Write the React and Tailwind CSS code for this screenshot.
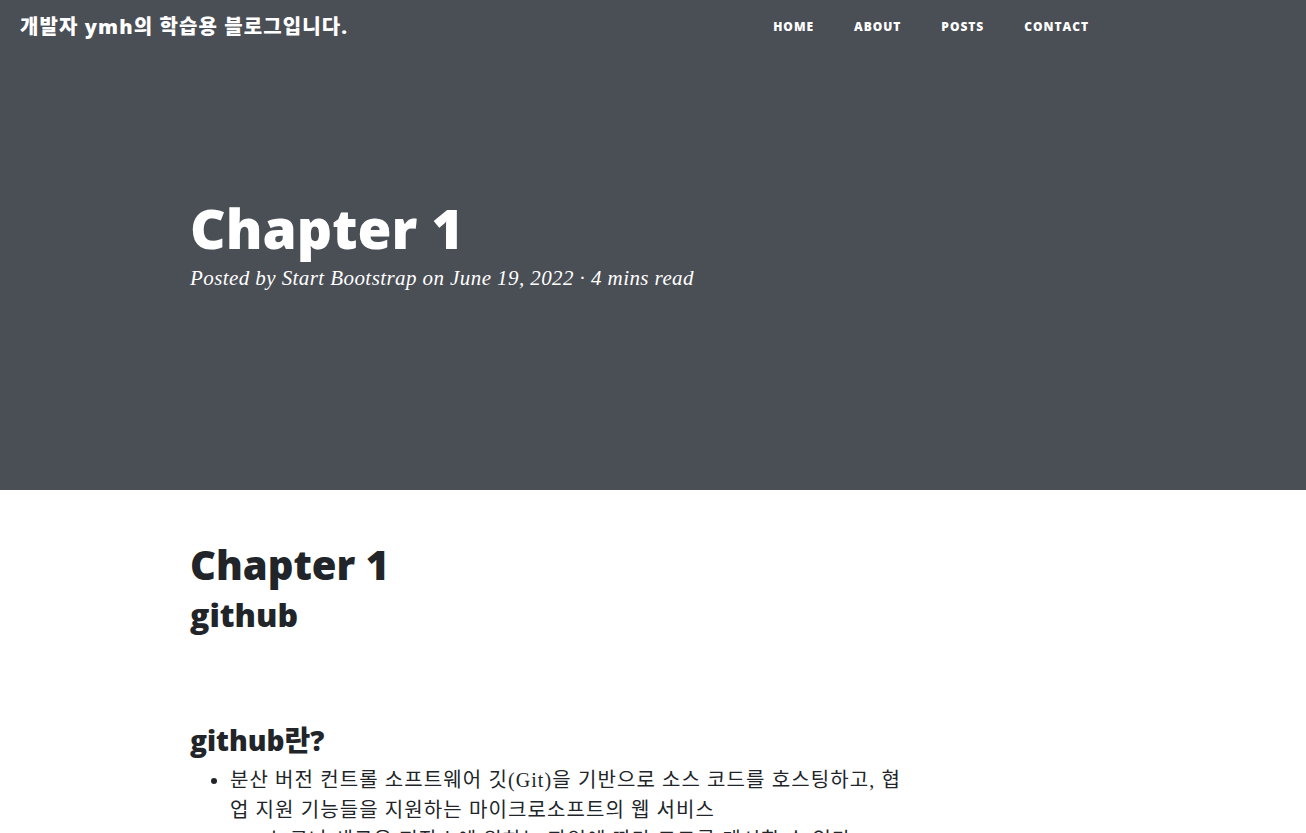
export default function App() {
  const sans = { fontFamily: '"Open Sans", "Noto Sans CJK KR", sans-serif' };
  const serif = { fontFamily: '"Liberation Serif", "Noto Sans CJK KR", serif' };
  return (
    <div className="w-full min-h-screen bg-white overflow-hidden">
      <header className="bg-[#4a4e55] h-[490px] flex flex-col">
        <nav className="flex items-center justify-between h-[53px] pl-5 pr-[197px]" style={sans}>
          <span className="text-white text-[20px] font-extrabold tracking-[0.055em]">개발자 ymh의 학습용 블로그입니다.</span>
          <ul className="flex items-center">
            {['HOME', 'ABOUT', 'POSTS', 'CONTACT'].map((t) => (
              <li key={t} className="px-5 text-white text-[12px] font-extrabold tracking-[0.08em]">{t}</li>
            ))}
          </ul>
        </nav>
        <div className="ml-[190px] mt-[142px]">
          <h1 className="text-white text-[55px] font-extrabold leading-[1.2]" style={sans}>Chapter 1</h1>
          <p className="text-white text-[21px] italic mt-[2px] tracking-[0.02em]" style={{ fontFamily: '"Liberation Serif", serif' }}>
            Posted by Start Bootstrap on June 19, 2022 · 4 mins read
          </p>
        </div>
      </header>
      <main className="ml-[190px] w-[720px] pt-[51px] text-[#212529]">
        <h1 className="text-[40px] font-extrabold leading-[1.2]" style={sans}>Chapter 1</h1>
        <h2 className="text-[32px] font-extrabold leading-[1.2] mt-[7px]" style={sans}>github</h2>
        <h3 className="text-[28px] font-extrabold leading-[1.2] mt-[90px]" style={sans}>github란?</h3>
        <ul className="list-disc pl-10 mt-[7px] text-[20px] leading-[30px] tracking-[1.1px]" style={serif}>
          <li>
            분산 버전 컨트롤 소프트웨어 깃(Git)을 기반으로 소스 코드를 호스팅하고, 협업 지원 기능들을 지원하는 마이크로소프트의 웹 서비스
            <ul className="list-[circle] pl-10">
              <li>누구나 새로운 저장소에 원하는 파일에 따라 코드를 게시할 수 있다</li>
            </ul>
          </li>
        </ul>
      </main>
    </div>
  );
}
